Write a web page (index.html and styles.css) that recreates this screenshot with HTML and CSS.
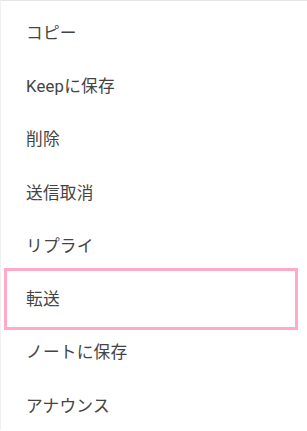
FILE: index.html
```html
<!DOCTYPE html>
<html lang="ja">
<head>
    <meta charset="UTF-8">
    <meta name="viewport" content="width=device-width, initial-scale=1.0">
    <title>メニュー</title>
    <link rel="stylesheet" href="styles.css">
</head>
<body>
    <ul class="menu">
        <li class="menu-item">コピー</li>
        <li class="menu-item">Keepに保存</li>
        <li class="menu-item">削除</li>
        <li class="menu-item">送信取消</li>
        <li class="menu-item">リプライ</li>
        <li class="menu-item selected">転送</li>
        <li class="menu-item">ノートに保存</li>
        <li class="menu-item">アナウンス</li>
    </ul>
</body>
</html>
```

FILE: styles.css
```css
body {
    margin: 0;
    padding: 0;
    background-color: #ffffff;
    font-family: Roboto, "Noto Sans CJK JP", sans-serif;
}

.menu {
    list-style: none;
    margin: 0;
    padding: 4px 0 0;
    border-top: 1px solid #e4e4e4;
    border-left: 1px solid #f0f0f0;
    height: 430px;
    box-sizing: border-box;
}

.menu-item {
    position: relative;
    height: 53.3px;
    display: flex;
    align-items: center;
    padding-left: 25px;
    font-size: 16.7px;
    color: #444444;
    letter-spacing: 0.2px;
}

.selected::after {
    content: "";
    position: absolute;
    top: -3px;
    bottom: -5px;
    left: 3px;
    right: 9px;
    border: 3px solid #ffaac9;
}
```
